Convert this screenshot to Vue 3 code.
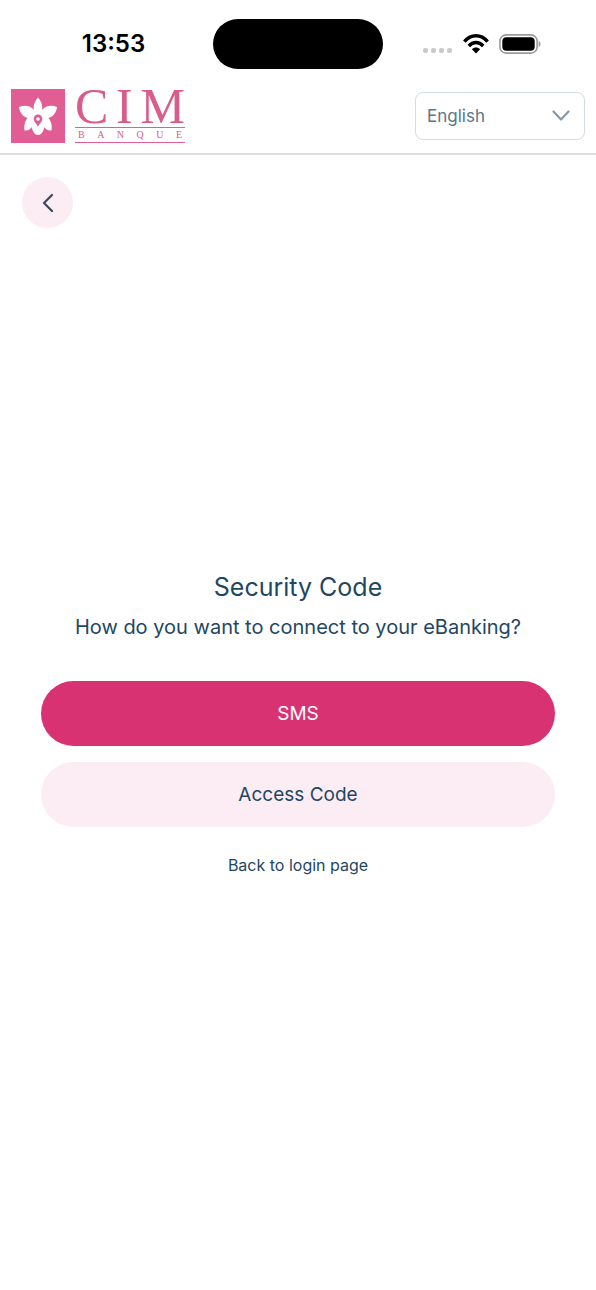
<script setup>
import { ref } from 'vue'

const language = ref('English')
const languages = ['English', 'Français', 'Deutsch', 'Italiano']
</script>

<template>
  <div class="page">
    <div class="status">
      <time class="clock">13:53</time>
      <div class="island"></div>
      <div class="indicators">
        <svg class="signal" width="30" height="20" viewBox="0 0 30 20" fill="#cacaca" aria-hidden="true">
          <rect x="0" y="12" width="5" height="5" rx="2" />
          <rect x="8" y="12" width="5" height="5" rx="2" />
          <rect x="16" y="12" width="5" height="5" rx="2" />
          <rect x="24" y="12" width="5" height="5" rx="2" />
        </svg>
        <svg width="26" height="20" viewBox="0 0 26 20" aria-hidden="true">
          <g fill="none" stroke="#000" stroke-width="3.4">
            <path d="M1.4 7.6C8-.2 18-.2 24.6 7.6" />
            <path d="M5.8 12C10 7.4 16 7.4 20.2 12" />
          </g>
          <path d="M13 19.4l-4.1-4.2c2.2-2.3 6-2.3 8.2 0z" />
        </svg>
        <svg width="42" height="20" viewBox="0 0 42 20" aria-hidden="true">
          <rect x=".9" y=".9" width="37.2" height="18.2" rx="6.2" fill="none" stroke="#9b9b9b" stroke-width="1.6" />
          <rect x="3.3" y="3.3" width="32.4" height="13.4" rx="4" />
          <path d="M39.6 7c2.6.8 2.6 5.2 0 6z" fill="#9b9b9b" />
        </svg>
      </div>
    </div>

    <header class="header">
      <div class="logo">
        <svg class="mark" width="54" height="54" viewBox="0 0 54 54" aria-hidden="true">
          <rect width="54" height="54" fill="#e05e94" />
          <g fill="#fff">
            <path d="M27 8.5c3.500 4 5.500 9 3.500 15l-1 5h-5l-1-5c-2-6 0-11 3.500-15z" />
            <path d="M26 29C24 18 17 14.500 8 18c.5 7 6 12 14 12z" />
            <path d="M28 29C30 18 37 14.500 46 18c-.5 7-6 12-14 12z" />
            <path d="M22 26c-7 2-9.500 8-8.500 15.500 4 .3 6.500-1.500 8.500-5.500z" />
            <path d="M32 26c7 2 9.500 8 8.500 15.500-4 .3-6.500-1.500-8.500-5.500z" />
            <path d="M20.500 24h13v12c0 5-3 10-6.500 10s-6.500-5-6.500-10z" />
          </g>
          <path d="M27 25.5c-2.600 0-4.300 2-4.300 4.400 0 3 3.100 4.600 4.300 8.100 1.200-3.500 4.300-5.100 4.300-8.100 0-2.400-1.700-4.400-4.300-4.400z" fill="#e05e94" />
          <circle cx="27" cy="30" r="1.8" fill="#fff" />
        </svg>
        <div class="wordmark">
          <div class="name"><span>C</span><span>I</span><span>M</span></div>
          <div class="sub">
            <span>B</span><span>A</span><span>N</span><span>Q</span><span>U</span><span>E</span>
          </div>
        </div>
      </div>
      <div class="language">
        <select v-model="language" aria-label="Language">
          <option v-for="item in languages" :key="item">{{ item }}</option>
        </select>
        <svg class="chevron" width="18" height="12" viewBox="0 0 18 12" aria-hidden="true">
          <path d="M1.5 1.5L9 9.5l7.5-8" fill="none" stroke="#8799a7" stroke-width="2.2" stroke-linecap="round" stroke-linejoin="round" />
        </svg>
      </div>
    </header>

    <main class="main">
      <button class="back" type="button" aria-label="Back">
        <svg width="12" height="20" viewBox="0 0 12 20" aria-hidden="true">
          <path d="M10 2L2 10l8 8" fill="none" stroke="#3a4856" stroke-width="2.2" stroke-linecap="round" stroke-linejoin="round" />
        </svg>
      </button>
      <section class="content">
        <h1>Security Code</h1>
        <p>How do you want to connect to your eBanking?</p>
        <div class="actions">
          <button class="choice primary" type="button">SMS</button>
          <button class="choice" type="button">Access Code</button>
        </div>
        <a class="login" href="#login">Back to login page</a>
      </section>
    </main>
  </div>
</template>

<style>
body {
  margin: 0;
  background: #fff;
}
</style>

<style scoped>
.page {
  min-height: 100vh;
  display: flex;
  flex-direction: column;
  font-family: Inter, "Liberation Sans", sans-serif;
  color: #1f4763;
  background: #fff;
}
.status {
  height: 88px;
  display: grid;
  grid-template-columns: 1fr 170px 1fr;
  align-items: center;
}
.clock {
  justify-self: center;
  padding-left: 14px;
  font-size: 24px;
  line-height: 32px;
  font-weight: 600;
  color: #000;
}
.island {
  height: 50px;
  border-radius: 25px;
  background: #000;
}
.indicators {
  display: flex;
  align-items: center;
  gap: 10px;
  padding-left: 40px;
}
.signal {
  margin-top: 4px;
}
.header {
  display: flex;
  justify-content: space-between;
  align-items: center;
  padding: 1px 11px 10px;
  border-bottom: 2px solid #dcdee0;
}
.logo {
  display: flex;
  gap: 10px;
}
.mark {
  display: block;
}
.wordmark {
  width: 110px;
  height: 54px;
  box-sizing: border-box;
  border-bottom: 1px solid #e05e94;
  font-family: "Liberation Serif", serif;
  color: #d95c8c;
}
.name {
  display: flex;
  justify-content: space-between;
  height: 38px;
  font-size: 50px;
  line-height: 34px;
  border-bottom: 1px solid #e05e94;
}
.sub {
  display: flex;
  justify-content: space-between;
  padding: 0 3px;
  font-size: 10px;
  line-height: 14px;
}
.language {
  position: relative;
  width: 170px;
}
select {
  display: block;
  width: 100%;
  height: 48px;
  box-sizing: border-box;
  padding: 0 40px 0 11px;
  border: 1px solid #d3dbe0;
  border-radius: 8px;
  appearance: none;
  background: #fff;
  color: #5c7689;
  font-family: inherit;
  font-size: 17px;
}
.chevron {
  position: absolute;
  right: 15px;
  top: 18px;
  pointer-events: none;
}
.main {
  flex: 1;
  display: grid;
}
.back,
.content {
  grid-area: 1 / 1;
}
.back {
  align-self: start;
  justify-self: start;
  display: flex;
  align-items: center;
  justify-content: center;
  width: 51px;
  height: 51px;
  margin: 22px;
  padding: 0;
  border: 0;
  border-radius: 50%;
  background: #fbedf3;
  z-index: 1;
}
.content {
  align-self: center;
  padding: 0 41px;
  text-align: center;
}
h1 {
  margin: 0 0 8px;
  font-size: 25px;
  line-height: 36px;
  font-weight: 400;
}
p {
  margin: 0 0 40px;
  font-size: 20px;
  line-height: 28px;
}
.actions {
  display: flex;
  flex-direction: column;
  gap: 16px;
  margin-bottom: 26px;
}
.choice {
  height: 65px;
  border: 0;
  border-radius: 33px;
  background: #fbedf3;
  color: #1f4763;
  font-family: inherit;
  font-size: 19px;
}
.primary {
  background: #d93273;
  color: #fff;
}
.login {
  display: block;
  width: fit-content;
  margin: 0 auto;
  color: #1f4763;
  font-size: 16px;
  line-height: 24px;
  text-decoration: none;
}
</style>
